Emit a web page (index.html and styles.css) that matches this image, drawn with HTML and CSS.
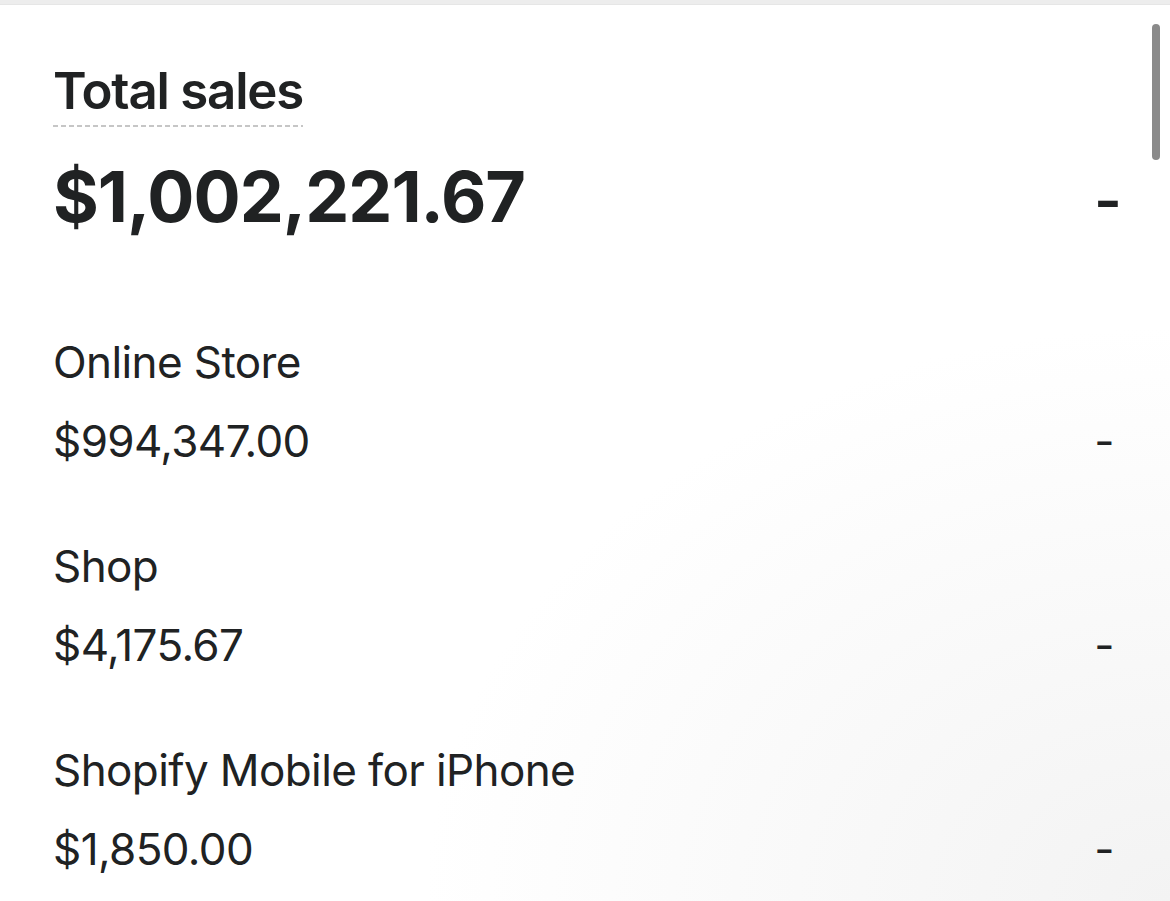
FILE: index.html
```html
<!DOCTYPE html>
<html lang="en">
<head>
    <meta charset="UTF-8">
    <meta name="viewport" content="width=device-width, initial-scale=1.0">
    <title>Total sales</title>
    <link rel="stylesheet" href="styles.css">
</head>
<body>

<div class="topbar"></div>

<!-- Sales card -->
<div class="panel">
    <div class="title-wrap">
        <span class="title">Total sales</span>
    </div>

    <div class="total-row">
        <span class="total">$1,002,221.67</span>
        <span class="total-dash">-</span>
    </div>

    <div class="channels">
        <div class="channel">
            <div class="label">Online Store</div>
            <div class="value-row">
                <span class="value">$994,347.00</span>
                <span class="dash">-</span>
            </div>
        </div>
        <div class="channel">
            <div class="label">Shop</div>
            <div class="value-row">
                <span class="value">$4,175.67</span>
                <span class="dash">-</span>
            </div>
        </div>
        <div class="channel">
            <div class="label">Shopify Mobile for iPhone</div>
            <div class="value-row">
                <span class="value">$1,850.00</span>
                <span class="dash">-</span>
            </div>
        </div>
    </div>

    <div class="scrollbar"></div>
</div>

</body>
</html>
```
FILE: styles.css
```css
/* Base Styles */
* {
    margin: 0;
    padding: 0;
    box-sizing: border-box;
    font-family: Inter, "Noto Sans", sans-serif;
}

body {
    min-height: 100vh;
    background: radial-gradient(ellipse at 100% 100%, #f3f3f3 0%, #ffffff 45%);
    color: #202223;
    overflow: hidden;
}

.topbar {
    height: 5px;
    background: #ededed;
    border-bottom: 1px solid #e6e6e6;
}

/* Card */
.panel {
    position: relative;
    padding: 54px 52px 0 53px;
}

.title-wrap {
    display: flex;
}

.title {
    font-size: 51px;
    font-weight: 600;
    line-height: 64px;
    letter-spacing: -1.2px;
    padding-bottom: 4px;
    background-image: repeating-linear-gradient(to right, #c6c6c6 0 5px, transparent 5px 8px);
    background-size: 100% 2px;
    background-position: left bottom;
    background-repeat: no-repeat;
}

.total-row {
    display: flex;
    justify-content: space-between;
    align-items: baseline;
    margin-top: 30px;
}

.total {
    font-size: 70px;
    font-weight: 700;
    line-height: 80px;
    letter-spacing: -1px;
}

.total-dash {
    font-size: 60px;
    font-weight: 600;
    line-height: 80px;
    margin-right: -4px;
}

/* Channels */
.channels {
    display: flex;
    flex-direction: column;
    gap: 71px;
    margin-top: 95px;
}

.channel {
    display: flex;
    flex-direction: column;
    gap: 25px;
}

.label,
.value,
.dash {
    font-size: 44px;
    line-height: 54px;
    font-weight: 400;
    letter-spacing: -0.6px;
}

.value-row {
    display: flex;
    justify-content: space-between;
    align-items: baseline;
}

.dash {
    padding-right: 4px;
}

.scrollbar {
    position: absolute;
    top: 19px;
    right: 10px;
    width: 8px;
    height: 136px;
    border-radius: 4px;
    background: #8a8a8a;
}
```
